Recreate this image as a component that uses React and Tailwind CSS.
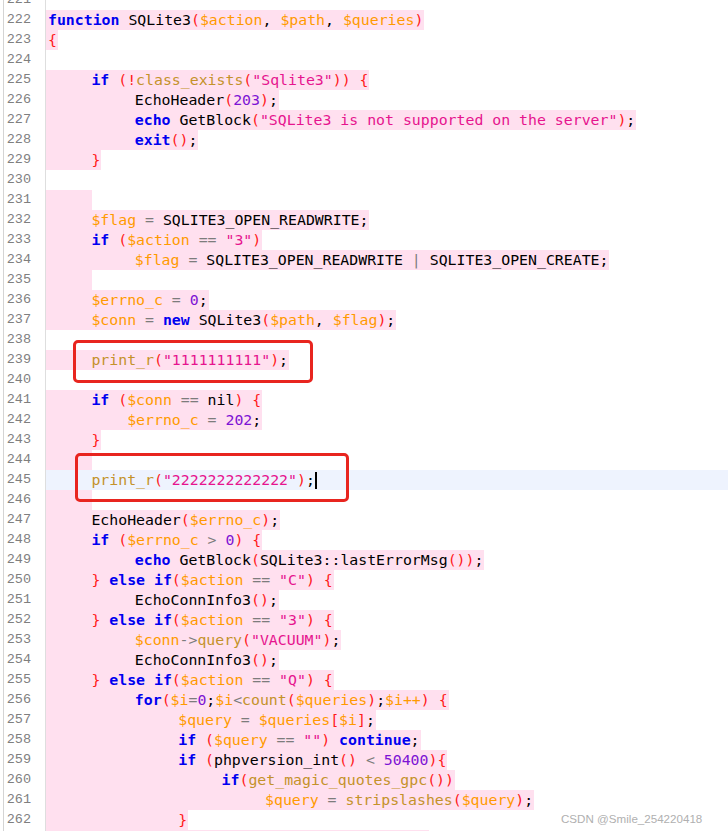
const KW = new Set(['function', 'if', 'echo', 'exit', 'new', 'else', 'for', 'continue']);
const FN = new Set(['class_exists', 'print_r', 'count', 'query', 'get_magic_quotes_gpc', 'stripslashes']);

// [line number, text, mark] — mark: 'p' pink diff, 'c' current line, '' plain
const LINES = [
  [221, '', ''],
  [222, 'function SQLite3($action, $path, $queries)', 'p'],
  [223, '{', 'p'],
  [224, '', ''],
  [225, '\tif (!class_exists("Sqlite3")) {', 'p'],
  [226, '\t\tEchoHeader(203);', 'p'],
  [227, '\t\techo GetBlock("SQLite3 is not supported on the server");', 'p'],
  [228, '\t\texit();', 'p'],
  [229, '\t}', 'p'],
  [230, '', ''],
  [231, '\t', 'p'],
  [232, '\t$flag = SQLITE3_OPEN_READWRITE;', 'p'],
  [233, '\tif ($action == "3")', 'p'],
  [234, '\t\t$flag = SQLITE3_OPEN_READWRITE | SQLITE3_OPEN_CREATE;', 'p'],
  [235, '\t', 'p'],
  [236, '\t$errno_c = 0;', 'p'],
  [237, '\t$conn = new SQLite3($path, $flag);', 'p'],
  [238, '', ''],
  [239, '\tprint_r("1111111111");', 'p'],
  [240, '', ''],
  [241, '\tif ($conn == nil) {', 'p'],
  [242, '\t    $errno_c = 202;', 'p'],
  [243, '\t}', 'p'],
  [244, '\t', 'p'],
  [245, '\tprint_r("2222222222222");', 'c'],
  [246, '\t', 'p'],
  [247, '\tEchoHeader($errno_c);', 'p'],
  [248, '\tif ($errno_c > 0) {', 'p'],
  [249, '\t\techo GetBlock(SQLite3::lastErrorMsg());', 'p'],
  [250, '\t} else if($action == "C") {', 'p'],
  [251, '\t\tEchoConnInfo3();', 'p'],
  [252, '\t} else if($action == "3") {', 'p'],
  [253, '\t\t$conn->query("VACUUM");', 'p'],
  [254, '\t\tEchoConnInfo3();', 'p'],
  [255, '\t} else if($action == "Q") {', 'p'],
  [256, '\t\tfor($i=0;$i<count($queries);$i++) {', 'p'],
  [257, '\t\t\t$query = $queries[$i];', 'p'],
  [258, '\t\t\tif ($query == "") continue;', 'p'],
  [259, '\t\t\tif (phpversion_int() < 50400){', 'p'],
  [260, '\t\t\t\tif(get_magic_quotes_gpc())', 'p'],
  [261, '\t\t\t\t\t$query = stripslashes($query);', 'p'],
  [262, '\t\t\t}', 'p'],
  [263, '\t\t\t$res = $conn->query($query);', 'p'],
];

const TOKEN = /\$\w+|"[^"]*"|[A-Za-z_]\w*|\d+|==|->|\+\+|::|[(){}\[\]!]|[=<>|]|\s+|./g;

function tokenClass(t) {
  if (t.startsWith('$') || t === '++') return 'text-[#ff9a00]';
  if (t.startsWith('"')) return 'text-[#e6148e]';
  if (/^\d+$/.test(t)) return 'text-[#7d14d4]';
  if (/^[(){}\[\]!]$/.test(t)) return 'text-[#ff1a1a]';
  if (/^(==|->|[=<>|])$/.test(t)) return 'text-[#7c7c7c]';
  if (KW.has(t)) return 'text-[#0000f0] font-bold';
  if (FN.has(t)) return 'text-[#c4922a]';
  return 'text-black';
}

const Code = ({ text }) =>
  (text.match(TOKEN) || []).map((t, i) => (
    <span key={i} className={tokenClass(t)}>
      {t}
    </span>
  ));

const Row = ({ n, text, mark }) => (
  <div className="flex h-[20px]">
    <div className="w-[46px] shrink-0 pl-[3px] bg-white">
      <div className="h-full border-l border-r border-l-[#d4d4d4] border-r-[#dedede] pr-[14px] text-right text-[#7f7f7f] text-[13.5px] leading-[19px] font-['Liberation_Mono',monospace]">
        {n}
      </div>
    </div>
    <div className={`flex flex-1 min-w-0 ${mark === 'c' ? 'bg-[#eef3fe]' : 'bg-white'}`}>
      <div
        className={`flex items-center pl-[2px] pr-[1px] whitespace-pre [tab-size:43.4px] text-[14.85px] leading-[20px] font-['DejaVu_Sans_Mono',monospace] ${
          mark === 'p' ? 'bg-[#ffe0ef]' : ''
        }`}
      >
        <span>
          <Code text={text} />
        </span>
        {mark === 'c' && <span className="w-[2px] h-[17px] bg-black" />}
      </div>
    </div>
  </div>
);

export default function App() {
  return (
    <div className="relative w-[728px] h-[831px] overflow-hidden bg-white">
      <div className="-mt-[10px]">
        {LINES.map(([n, text, mark]) => (
          <Row key={n} n={n} text={text} mark={mark} />
        ))}
      </div>

      <div className="absolute left-[73px] top-[340px] w-[240px] h-[43px] border-[3px] border-[#e8251f] rounded-[5px]" />
      <div className="absolute left-[75px] top-[453px] w-[274px] h-[49px] border-[3px] border-[#e8251f] rounded-[5px]" />

      <div className="absolute left-[561px] top-[811px] text-[11.6px] leading-[15px] text-[#b0b0b0] font-['Liberation_Sans',sans-serif]">
        CSDN @Smile_254220418
      </div>
    </div>
  );
}
